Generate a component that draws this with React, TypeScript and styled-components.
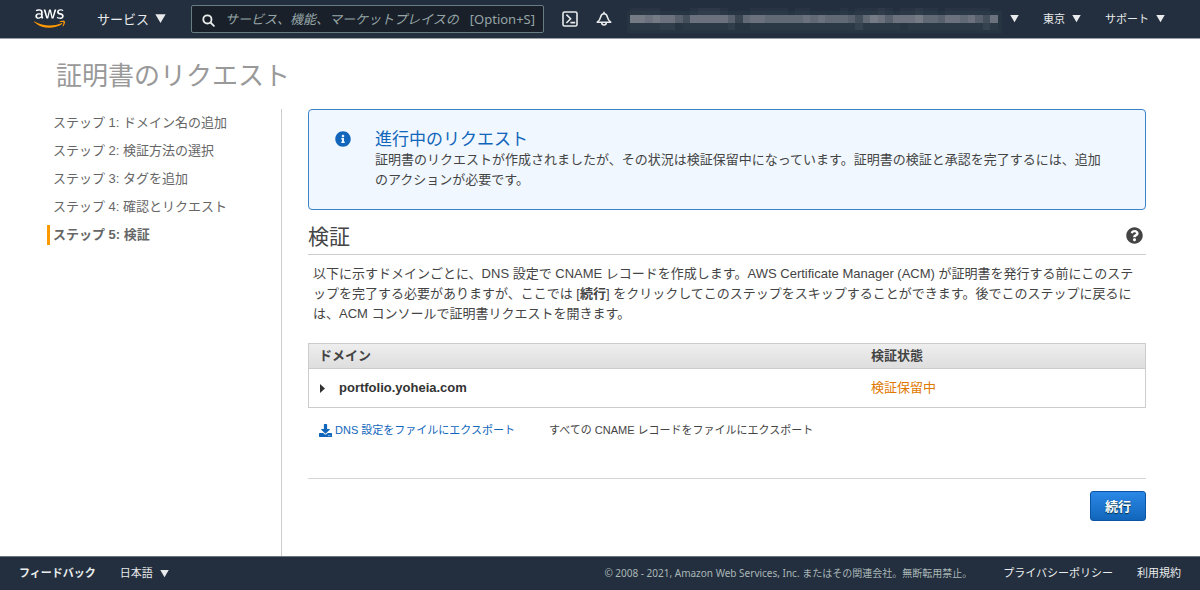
import React from "react";
import styled, { createGlobalStyle } from "styled-components";
import { FaAws, FaInfoCircle, FaQuestionCircle, FaDownload } from "react-icons/fa";

const CONSOLE_FONT = '"Noto Sans", "Noto Sans CJK JP", sans-serif';
const BODY_FONT = '"Liberation Sans", "Noto Sans CJK JP", sans-serif';

const GlobalStyle = createGlobalStyle`
  *, *::before, *::after { box-sizing: border-box; }
  body { margin: 0; background: #fff; color: #444; font: 13px/20px ${BODY_FONT}; }
  button, input { font-family: inherit; }
  h1, h2, p, ol { margin: 0; padding: 0; }
`;

const Page = styled.div`
  display: flex;
  flex-direction: column;
  min-height: 100vh;
`;

const TopBar = styled.header`
  display: flex;
  align-items: center;
  height: 39px;
  padding: 0 35px 1px 34px;
  background: #232f3e;
  border-bottom: 1px solid #9a9ea6;
  font-family: ${CONSOLE_FONT};
`;

const LogoLink = styled.a`
  display: grid;
  flex: none;
  width: 31px;
  margin-right: 32px;

  svg {
    grid-area: 1 / 1;
    width: 31px;
    height: 25px;
  }
`;

const LogoWord = styled(FaAws)`
  color: #fff;
  clip-path: inset(0 0 41% 0);
`;

const LogoSmile = styled(FaAws)`
  color: #ff9900;
  clip-path: inset(59% 0 0 0);
`;

const BarButton = styled.button<{ $size: number; $gap: number }>`
  display: flex;
  flex: none;
  align-items: center;
  gap: ${(p) => p.$gap}px;
  padding: 0;
  border: 0;
  background: none;
  color: #e8eaeb;
  font-size: ${(p) => p.$size}px;
  line-height: 16px;
  white-space: nowrap;
  cursor: pointer;
`;

const SearchBox = styled.label`
  display: flex;
  flex: 0 1 353px;
  align-items: center;
  min-width: 0;
  height: 28px;
  margin: 0 18px 0 25px;
  padding: 0 8px 0 10px;
  border: 1px solid #687c83;
  border-radius: 2px;
  background: #1a202a;
  color: #95a5a6;
  font-size: 13px;

  svg { flex: none; }
`;

const SearchInput = styled.input`
  flex: 1;
  min-width: 0;
  margin: 0 6px 0 10px;
  padding: 0;
  border: 0;
  outline: 0;
  background: none;
  color: #fff;
  font-size: 13px;

  &::placeholder {
    color: #95a5a6;
    font-style: italic;
    opacity: 1;
  }
`;

const IconGroup = styled.div`
  display: flex;
  flex: none;
  gap: 18px;
`;

const AccountNav = styled.nav`
  display: flex;
  flex: none;
  gap: 24px;
  margin-left: auto;
`;

const Content = styled.div`
  display: flex;
  flex: 1;
  flex-direction: column;
`;

const PageTitle = styled.h1`
  padding: 18px 56px 14px;
  color: #999;
  font-size: 26px;
  font-weight: 400;
  line-height: 38px;
`;

const Columns = styled.div`
  display: flex;
  flex: 1;
`;

const Sidebar = styled.nav`
  flex: none;
  width: 282px;
  border-right: 1px solid #ccc;
`;

const StepList = styled.ol`
  display: flex;
  flex-direction: column;
  gap: 8px;
  padding: 4px 0 0 47px;
  list-style: none;
`;

const Step = styled.li<{ $current: boolean }>`
  padding-left: 3px;
  border-left: 3px solid ${(p) => (p.$current ? "#ff9900" : "transparent")};
  color: #666;
  font-weight: ${(p) => (p.$current ? 700 : 400)};
`;

const Main = styled.main`
  flex: 1;
  min-width: 0;
  padding: 0 54px 35px 26px;
`;

const Alert = styled.section`
  display: flex;
  padding: 20px 34px 19px 26px;
  border: 1px solid #3c82c8;
  border-radius: 4px;
  background: #f0f7fe;

  svg {
    flex: none;
    margin: 1px 24px 0 0;
    color: #1166bb;
  }
`;

const AlertTitle = styled.h2`
  color: #1166bb;
  font-size: 17px;
  font-weight: 400;
  line-height: 20px;
`;

const SectionHead = styled.div`
  display: flex;
  align-items: center;
  justify-content: space-between;
  padding: 12px 3px 2px 0;
  border-bottom: 1px solid #ccc;
`;

const SectionTitle = styled.h2`
  font-size: 21px;
  font-weight: 400;
  line-height: 30px;
`;

const HelpButton = styled.button`
  display: flex;
  padding: 0 0 4px;
  border: 0;
  background: none;
  color: #444;
  cursor: pointer;
`;

const Intro = styled.p`
  padding: 9px 5px 19px;
`;

const DomainTable = styled.table`
  width: 100%;
  border: 1px solid #ccc;
  border-collapse: collapse;
  table-layout: fixed;
  text-align: left;
`;

const HeadCell = styled.th<{ $width?: string }>`
  width: ${(p) => p.$width ?? "auto"};
  height: 25px;
  padding: 0 10px;
  border-bottom: 1px solid #ccc;
  font-weight: 700;
`;

const HeadRow = styled.tr`
  background: linear-gradient(#eee, #ddd);
`;

const Cell = styled.td`
  height: 39px;
  padding: 0 10px;
`;

const Status = styled.span`
  color: #e07700;
`;

const DomainToggle = styled.button`
  display: flex;
  align-items: center;
  gap: 14px;
  padding: 0 0 0 1px;
  border: 0;
  background: none;
  color: #333;
  font-size: 13px;
  font-weight: 700;
  line-height: 20px;
  cursor: pointer;
`;

const ExportRow = styled.div`
  display: flex;
  gap: 34px;
  padding: 12px 11px 38px;
  border-bottom: 1px solid #d5d5d5;
  font-size: 11px;
`;

const ExportLink = styled.a`
  display: flex;
  align-items: center;
  gap: 3px;
  color: #1166bb;
  text-decoration: none;
`;

const Actions = styled.div`
  display: flex;
  justify-content: flex-end;
  padding-top: 12px;
`;

const PrimaryButton = styled.button`
  height: 30px;
  padding: 0 14px 2px;
  border: 1px solid #0a55a5;
  border-radius: 3px;
  background: linear-gradient(#2b88e6, #1166bb);
  color: #fff;
  font-size: 13px;
  font-weight: 700;
  text-shadow: 0 1px 1px #034;
  cursor: pointer;
`;

const Footer = styled.footer`
  display: flex;
  align-items: center;
  height: 34px;
  padding: 0 19px 1px;
  border-top: 1px solid #6b747e;
  background: #232f3e;
  color: #eaeded;
  font: 11px/16px ${CONSOLE_FONT};
`;

const FooterLink = styled.a<{ $bold?: boolean }>`
  margin-right: 24px;
  color: inherit;
  font-weight: ${(p) => (p.$bold ? 700 : 400)};
  text-decoration: none;

  &:last-child { margin-right: 0; }
`;

const Copyright = styled.span`
  margin: 0 31px 0 auto;
  color: #aab7b8;
  font-size: 10px;
`;

const Caret = ({ size = 9 }: { size?: number }) => (
  <svg width={size} height={size} viewBox="0 0 10 10" aria-hidden="true">
    <path d="M0.3 1.2h9.4L5 9.2z" fill="currentColor" />
  </svg>
);

const SearchIcon = () => (
  <svg width="13" height="16" viewBox="0 0 13 16" fill="none" stroke="#eaeded" strokeWidth="1.8" aria-hidden="true">
    <circle cx="5.4" cy="8.400" r="4.100" />
    <path d="M8.500 11.500l3.400 3.400" strokeLinecap="round" />
  </svg>
);

const ShellIcon = () => (
  <svg width="16" height="16" viewBox="0 0 16 16" fill="none" stroke="currentColor" strokeWidth="1.6" aria-hidden="true">
    <rect x="1" y="1" width="14" height="14" rx="1.6" />
    <path d="M4.400 3.600L8.600 7.800l-4.200 4.200M8.400 11.600h4.800" />
  </svg>
);

const BellIcon = () => (
  <svg width="16" height="16" viewBox="0 0 16 16" fill="none" stroke="currentColor" strokeWidth="1.6" strokeLinejoin="round" aria-hidden="true">
    <path d="M1.300 11.200h13.400c-2-1.600-2.800-2.800-3.200-4.800C11 4 10.200 2.800 8 2.800S5 4 4.500 6.400C4.100 8.400 3.300 9.600 1.300 11.200z" />
    <path d="M8 2.800V.800M5.700 11.500a2.300 2.500 0 0 0 4.600 0" />
  </svg>
);

/* Brightness of each mosaic cell, one digit per cell, for the three rows. */
const MOSAIC = [
  "1111000012221000111110110000101112101121101111110",
  "8878775377777526776666676766653687577786657767537",
  "1111220111111200111111111111113111110111111111131",
];

const MaskedAccount = () => (
  <svg width="375" height="30" viewBox="0 0 375 30" aria-hidden="true" shapeRendering="crispEdges">
    <rect x="0" y="7" width="375" height="22" fill="#273442" />
    {MOSAIC.map((row, r) =>
      row.split("").map((level, c) => (
        <rect
          key={`${r}-${c}`}
          x={c * 7.5 + 3}
          y={[4, 11, 19][r]}
          width={7.5}
          height={[7, 8, 7][r]}
          fill={r === 1 ? "#8d929b" : "#65727c"}
          fillOpacity={Number(level) * (r === 1 ? 0.095 : 0.08)}
        />
      )),
    )}
  </svg>
);

const STEPS = [
  "ステップ 1: ドメイン名の追加",
  "ステップ 2: 検証方法の選択",
  "ステップ 3: タグを追加",
  "ステップ 4: 確認とリクエスト",
  "ステップ 5: 検証",
];

export default function App() {
  return (
    <Page lang="ja">
      <GlobalStyle />
      <TopBar>
        <LogoLink href="#" aria-label="aws">
          <LogoWord />
          <LogoSmile />
        </LogoLink>
        <BarButton $size={13} $gap={6}>
          サービス
          <Caret size={11} />
        </BarButton>
        <SearchBox>
          <SearchIcon />
          <SearchInput aria-label="検索" placeholder="サービス、機能、マーケットプレイスの" />
          <span>[Option+S]</span>
        </SearchBox>
        <IconGroup>
          <BarButton $size={13} $gap={0} aria-label="CloudShell">
            <ShellIcon />
          </BarButton>
          <BarButton $size={13} $gap={0} aria-label="通知">
            <BellIcon />
          </BarButton>
        </IconGroup>
        <AccountNav>
          <BarButton $size={11} $gap={8} aria-label="アカウント">
            <MaskedAccount />
            <Caret />
          </BarButton>
          <BarButton $size={11} $gap={7}>
            東京
            <Caret />
          </BarButton>
          <BarButton $size={11} $gap={7}>
            サポート
            <Caret />
          </BarButton>
        </AccountNav>
      </TopBar>

      <Content>
        <PageTitle>証明書のリクエスト</PageTitle>
        <Columns>
          <Sidebar>
            <StepList>
              {STEPS.map((step, i) => (
                <Step key={step} $current={i === STEPS.length - 1}>
                  {step}
                </Step>
              ))}
            </StepList>
          </Sidebar>
          <Main>
            <Alert>
              <FaInfoCircle size={16} />
              <div>
                <AlertTitle>進行中のリクエスト</AlertTitle>
                <p>
                  証明書のリクエストが作成されましたが、その状況は検証保留中になっています。証明書の検証と承認を完了するには、追加のアクションが必要です。
                </p>
              </div>
            </Alert>
            <SectionHead>
              <SectionTitle>検証</SectionTitle>
              <HelpButton aria-label="ヘルプ">
                <FaQuestionCircle size={17} />
              </HelpButton>
            </SectionHead>
            <Intro>
              以下に示すドメインごとに、DNS 設定で CNAME レコードを作成します。AWS Certificate Manager (ACM)
              が証明書を発行する前にこのステップを完了する必要がありますが、ここでは [<b>続行</b>]
              をクリックしてこのステップをスキップすることができます。後でこのステップに戻るには、ACM
              コンソールで証明書リクエストを開きます。
            </Intro>
            <DomainTable>
              <thead>
                <HeadRow>
                  <HeadCell $width="66%">ドメイン</HeadCell>
                  <HeadCell>検証状態</HeadCell>
                </HeadRow>
              </thead>
              <tbody>
                <tr>
                  <Cell>
                    <DomainToggle aria-expanded="false">
                      <svg width="5" height="9" viewBox="0 0 5 9" aria-hidden="true">
                        <path d="M0 0l5 4.500-5 4.500z" fill="currentColor" />
                      </svg>
                      portfolio.yoheia.com
                    </DomainToggle>
                  </Cell>
                  <Cell>
                    <Status>検証保留中</Status>
                  </Cell>
                </tr>
              </tbody>
            </DomainTable>
            <ExportRow>
              <ExportLink href="#">
                <FaDownload size={13} />
                DNS 設定をファイルにエクスポート
              </ExportLink>
              <span>すべての CNAME レコードをファイルにエクスポート</span>
            </ExportRow>
            <Actions>
              <PrimaryButton>続行</PrimaryButton>
            </Actions>
          </Main>
        </Columns>
      </Content>

      <Footer>
        <FooterLink href="#" $bold>
          フィードバック
        </FooterLink>
        <BarButton $size={11} $gap={7}>
          日本語
          <Caret />
        </BarButton>
        <Copyright>© 2008 - 2021, Amazon Web Services, Inc. またはその関連会社。無断転用禁止。</Copyright>
        <FooterLink href="#">プライバシーポリシー</FooterLink>
        <FooterLink href="#">利用規約</FooterLink>
      </Footer>
    </Page>
  );
}
